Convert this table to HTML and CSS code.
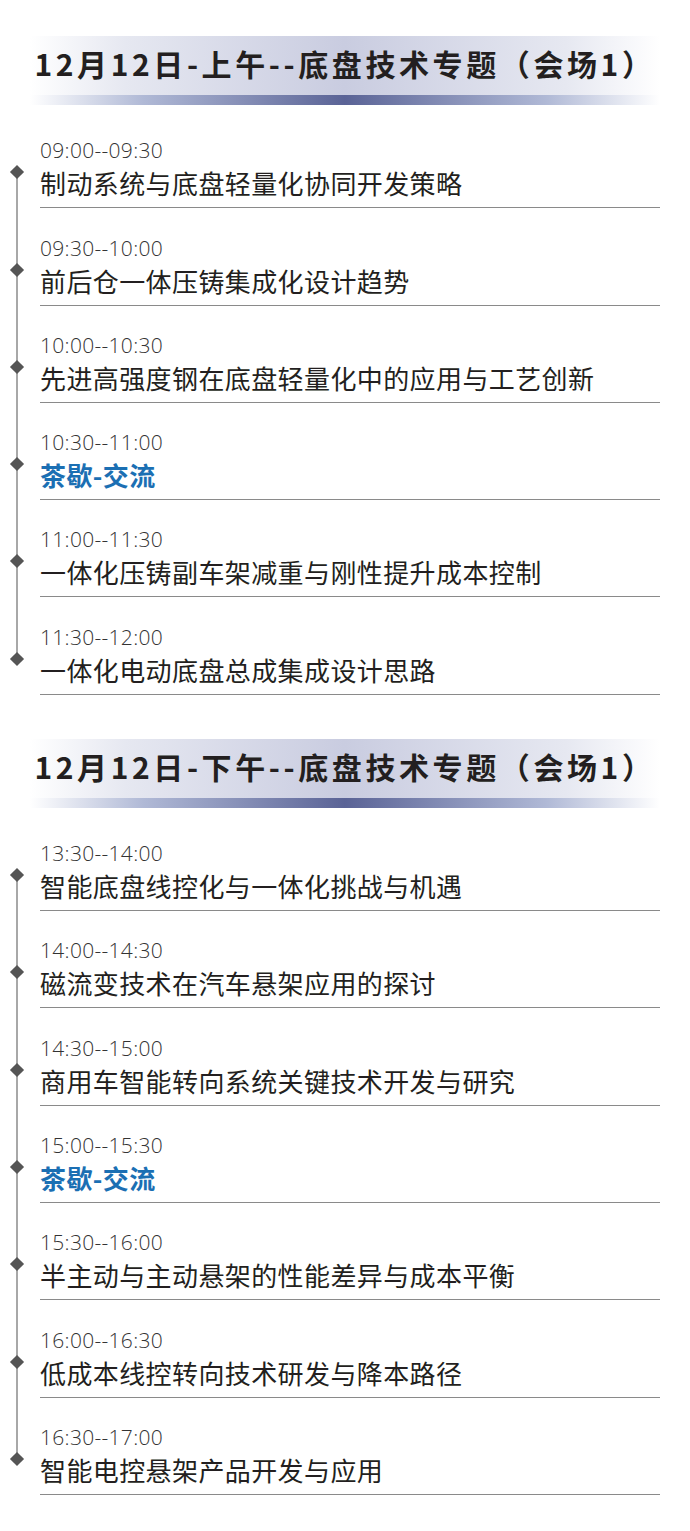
FILE: index.html
```html
<!DOCTYPE html>
<html lang="zh-CN">
<head>
  <meta charset="UTF-8">
  <title>12月12日 底盘技术专题</title>
  <link rel="stylesheet" href="styles.css">
</head>
<body>
  <div class="section">
    <div class="head">
      <h2>12月12日-上午--底盘技术专题（会场1）</h2>
    </div>
    <ul class="timeline">
      <li class="item">
        <div class="time">09:00--09:30</div>
        <div class="title">制动系统与底盘轻量化协同开发策略</div>
      </li>
      <li class="item">
        <div class="time">09:30--10:00</div>
        <div class="title">前后仓一体压铸集成化设计趋势</div>
      </li>
      <li class="item">
        <div class="time">10:00--10:30</div>
        <div class="title">先进高强度钢在底盘轻量化中的应用与工艺创新</div>
      </li>
      <li class="item">
        <div class="time">10:30--11:00</div>
        <div class="title break">茶歇-交流</div>
      </li>
      <li class="item">
        <div class="time">11:00--11:30</div>
        <div class="title">一体化压铸副车架减重与刚性提升成本控制</div>
      </li>
      <li class="item">
        <div class="time">11:30--12:00</div>
        <div class="title">一体化电动底盘总成集成设计思路</div>
      </li>
    </ul>
  </div>

  <div class="section">
    <div class="head">
      <h2>12月12日-下午--底盘技术专题（会场1）</h2>
    </div>
    <ul class="timeline">
      <li class="item">
        <div class="time">13:30--14:00</div>
        <div class="title">智能底盘线控化与一体化挑战与机遇</div>
      </li>
      <li class="item">
        <div class="time">14:00--14:30</div>
        <div class="title">磁流变技术在汽车悬架应用的探讨</div>
      </li>
      <li class="item">
        <div class="time">14:30--15:00</div>
        <div class="title">商用车智能转向系统关键技术开发与研究</div>
      </li>
      <li class="item">
        <div class="time">15:00--15:30</div>
        <div class="title break">茶歇-交流</div>
      </li>
      <li class="item">
        <div class="time">15:30--16:00</div>
        <div class="title">半主动与主动悬架的性能差异与成本平衡</div>
      </li>
      <li class="item">
        <div class="time">16:00--16:30</div>
        <div class="title">低成本线控转向技术研发与降本路径</div>
      </li>
      <li class="item">
        <div class="time">16:30--17:00</div>
        <div class="title">智能电控悬架产品开发与应用</div>
      </li>
    </ul>
  </div>
</body>
</html>
```

FILE: styles.css
```css
body {
  margin: 0;
  background: #fff;
  font-family: "Noto Sans", "Noto Sans CJK SC", sans-serif;
  color: #231f20;
}
.section {
  padding-top: 36px;
}
.section + .section {
  padding-top: 44px;
}

/* Header band */
.head {
  margin: 0 30px;
  padding-bottom: 10px;
  background:
    linear-gradient(to right, rgba(255,255,255,0), #b0b9d6 18%, #5a6396 50%, #b0b9d6 82%, rgba(255,255,255,0)) bottom / 100% 10px no-repeat;
}
.head h2 {
  margin: 0;
  height: 59px;
  line-height: 54px;
  text-align: center;
  font-family: "Noto Sans CJK SC", sans-serif;
  font-weight: 700;
  font-size: 30px;
  letter-spacing: 3.6px;
  color: #231f20;
  background: linear-gradient(to right, rgba(255,255,255,0) 0%, #e6e8f1 15%, #c9cce0 50%, #e6e8f1 85%, rgba(255,255,255,0) 100%);
}

/* Timeline */
.timeline {
  list-style: none;
  margin: 0;
  padding: 6px 30px 0 40px;
}
.item {
  position: relative;
  margin-top: 26.3px;
  padding-bottom: 7px;
  border-bottom: 1px solid #8a8a8a;
}
.item::before {
  content: "";
  position: absolute;
  left: -28px;
  top: 30px;
  width: 10px;
  height: 10px;
  background: #555;
  transform: rotate(45deg);
  z-index: 1;
}
.item::after {
  content: "";
  position: absolute;
  left: -24px;
  top: 35px;
  width: 2px;
  height: 97px;
  background: #a8a8a8;
}
.item:last-child::after {
  display: none;
}
.time {
  font-family: "Open Sans", "Noto Sans", sans-serif;
  font-weight: 300;
  font-size: 21px;
  letter-spacing: 0.3px;
  line-height: 26px;
  color: #333;
}
.title {
  margin-top: 3px;
  font-family: "Noto Sans CJK SC", sans-serif;
  font-size: 26px;
  letter-spacing: 0.4px;
  line-height: 34px;
}
.title.break {
  color: #1b6fb3;
  font-weight: 700;
}
```
